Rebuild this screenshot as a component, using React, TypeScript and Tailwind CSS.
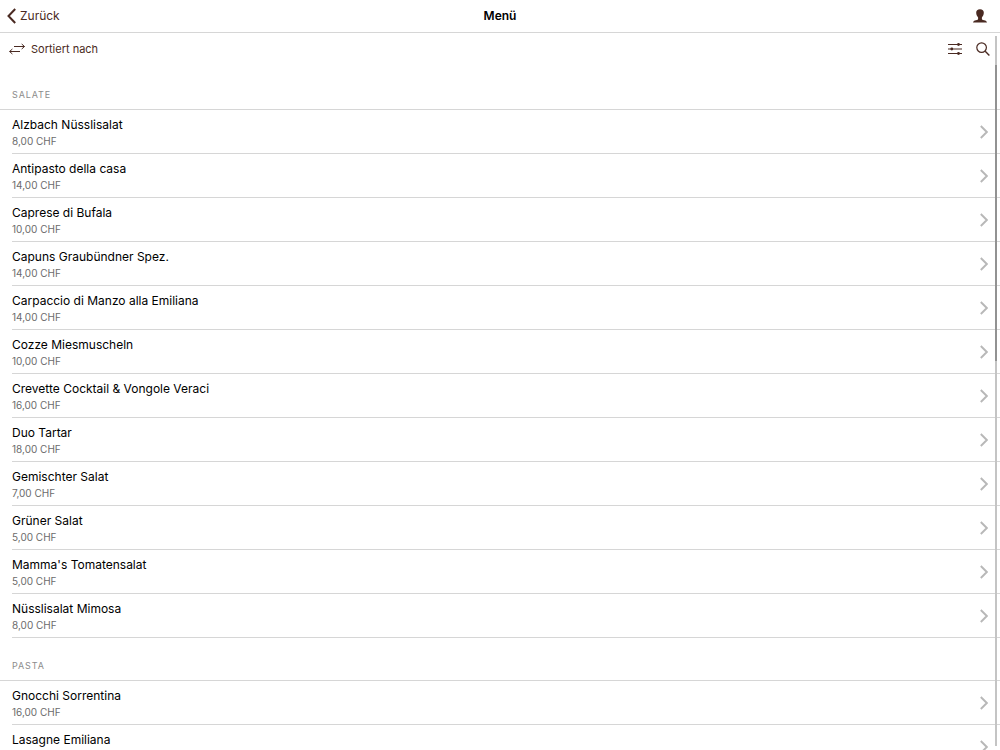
type Dish = { name: string; price?: string };
type Section = { title: string; dishes: Dish[] };

const sections: Section[] = [
  {
    title: "Salate",
    dishes: [
      { name: "Alzbach Nüsslisalat", price: "8,00 CHF" },
      { name: "Antipasto della casa", price: "14,00 CHF" },
      { name: "Caprese di Bufala", price: "10,00 CHF" },
      { name: "Capuns Graubündner Spez.", price: "14,00 CHF" },
      { name: "Carpaccio di Manzo alla Emiliana", price: "14,00 CHF" },
      { name: "Cozze Miesmuscheln", price: "10,00 CHF" },
      { name: "Crevette Cocktail & Vongole Veraci", price: "16,00 CHF" },
      { name: "Duo Tartar", price: "18,00 CHF" },
      { name: "Gemischter Salat", price: "7,00 CHF" },
      { name: "Grüner Salat", price: "5,00 CHF" },
      { name: "Mamma's Tomatensalat", price: "5,00 CHF" },
      { name: "Nüsslisalat Mimosa", price: "8,00 CHF" },
    ],
  },
  {
    title: "Pasta",
    dishes: [
      { name: "Gnocchi Sorrentina", price: "16,00 CHF" },
      { name: "Lasagne Emiliana" },
    ],
  },
];

function BackIcon() {
  return (
    <svg width="9" height="16" viewBox="0 0 9 16" fill="none" stroke="currentColor" strokeWidth="2" aria-hidden="true">
      <path d="M8.200 1 1.500 8l6.700 7" />
    </svg>
  );
}

function UserIcon() {
  return (
    <svg width="14" height="14" viewBox="0 0 14 14" fill="currentColor" aria-hidden="true">
      <path d="M7 .2C4.500.2 3.200 1.600 3.200 3.600c0 1.900.7 3.700 1.900 4.800v1.500c0 .7-.8 1-2.100 1.300C1.300 11.600.2 12.200 0 13.500h14c-.2-1.300-1.300-1.900-3-2.300-1.300-.3-2.100-.6-2.100-1.300V8.400c1.200-1.100 1.900-2.900 1.900-4.800C10.800 1.600 9.500.2 7 .2Z" />
    </svg>
  );
}

function SortIcon() {
  return (
    <svg width="16" height="12" viewBox="0 0 16 12" fill="none" stroke="currentColor" strokeWidth="1" aria-hidden="true">
      <path d="M5 3.500h10.500M12.700 1l2.800 2.500L12.700 6M11 8.500H.6M3.400 6 .6 8.500 3.400 11" />
    </svg>
  );
}

function FilterIcon() {
  return (
    <svg width="14" height="12" viewBox="0 0 14 12" fill="none" stroke="currentColor" strokeWidth="1.100" aria-hidden="true">
      <path d="M0 1.500h14M0 6h14M0 10.500h14" />
      <g fill="currentColor" stroke="none">
        <circle cx="10.500" cy="1.500" r="1.400" />
        <circle cx="3.800" cy="6" r="1.400" />
        <circle cx="10.500" cy="10.500" r="1.400" />
      </g>
    </svg>
  );
}

function SearchIcon() {
  return (
    <svg width="14" height="14" viewBox="0 0 14 14" fill="none" stroke="currentColor" strokeWidth="1.200" aria-hidden="true">
      <circle cx="5.600" cy="5.600" r="4.800" />
      <path d="m9.200 9.200 4.200 4.200" strokeWidth="1.400" />
    </svg>
  );
}

function ChevronIcon() {
  return (
    <svg width="8" height="14" viewBox="0 0 8 14" fill="none" stroke="currentColor" strokeWidth="1.900" aria-hidden="true">
      <path d="m.8 1 6 6-6 6" />
    </svg>
  );
}

function DishRow({ dish }: { dish: Dish }) {
  return (
    <li className="pl-3">
      <a href="#" className="flex h-11 items-center justify-between border-b border-[#d6d6d6] pr-3">
        <span className="flex flex-col self-start pt-[7px]">
          <span className="text-xs leading-4 text-black">{dish.name}</span>
          {dish.price && <span className="text-[10px] leading-4 text-[#6b6b6b]">{dish.price}</span>}
        </span>
        <span className="text-[#b8b8b8]">
          <ChevronIcon />
        </span>
      </a>
    </li>
  );
}

export default function App() {
  return (
    <div className="flex h-screen flex-col overflow-hidden bg-white font-['Inter',sans-serif] text-[#4a2a22]">
      <header className="grid h-[33px] shrink-0 grid-cols-[1fr_auto_1fr] items-center border-b border-[#d6d6d6] px-[7px]">
        <button type="button" className="flex items-center gap-1 justify-self-start text-xs leading-4">
          <BackIcon />
          Zurück
        </button>
        <h1 className="text-xs leading-4 font-semibold text-black">Menü</h1>
        <button type="button" aria-label="Profil" className="mr-[6px] justify-self-end">
          <UserIcon />
        </button>
      </header>

      <main className="relative min-h-0 flex-1">
        <div className="mb-[2px] flex h-8 items-center justify-between pr-[10px] pl-[9px]">
          <button type="button" className="flex items-center gap-[6px] text-[11px] leading-4">
            <SortIcon />
            Sortiert nach
          </button>
          <div className="flex items-center gap-[14px]">
            <button type="button" aria-label="Filter">
              <FilterIcon />
            </button>
            <button type="button" aria-label="Suchen">
              <SearchIcon />
            </button>
          </div>
        </div>

        {sections.map((section) => (
          <section key={section.title}>
            <h2 className="flex h-[43px] items-end border-b border-[#d6d6d6] px-3 pb-2 text-[9px] leading-3 tracking-widest text-[#8c8c8c] uppercase">
              {section.title}
            </h2>
            <ul>
              {section.dishes.map((dish) => (
                <DishRow key={dish.name} dish={dish} />
              ))}
            </ul>
          </section>
        ))}

        {/* Scroll indicator */}
        <div className="absolute top-[3px] right-[3px] bottom-1 w-[2px] bg-[#c4c4c4]">
          <div className="mt-[29px] h-[296px] bg-[#929292]" />
        </div>
      </main>
    </div>
  );
}
